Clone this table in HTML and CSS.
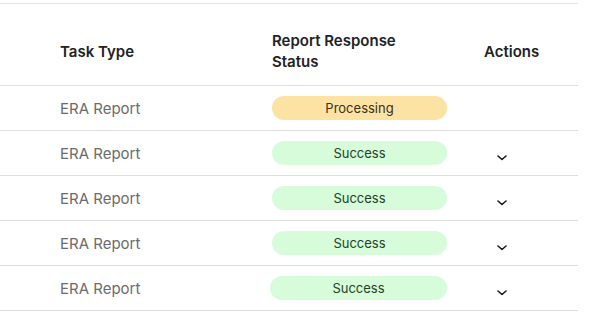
FILE: index.html
```html
<!DOCTYPE html>
<html>
<head>
<meta charset="utf-8">
<link rel="stylesheet" href="styles.css">
</head>
<body>
<div class="table">
  <div class="row head">
    <div class="cell c1">Task Type</div>
    <div class="cell c2">Report Response<br>Status</div>
    <div class="cell c3">Actions</div>
  </div>
  <div class="row">
    <div class="cell c1 type">ERA Report</div>
    <div class="cell c2"><span class="pill processing">Processing</span></div>
    <div class="cell c3"></div>
  </div>
  <div class="row">
    <div class="cell c1 type">ERA Report</div>
    <div class="cell c2"><span class="pill success">Success</span></div>
    <div class="cell c3"><svg class="chev" viewBox="0 0 10 6" width="10" height="6"><path d="M1 1 L5 4.5 L9 1" fill="none" stroke="#1a1a1a" stroke-width="1.6" stroke-linecap="round" stroke-linejoin="round"/></svg></div>
  </div>
  <div class="row">
    <div class="cell c1 type">ERA Report</div>
    <div class="cell c2"><span class="pill success">Success</span></div>
    <div class="cell c3"><svg class="chev" viewBox="0 0 10 6" width="10" height="6"><path d="M1 1 L5 4.5 L9 1" fill="none" stroke="#1a1a1a" stroke-width="1.6" stroke-linecap="round" stroke-linejoin="round"/></svg></div>
  </div>
  <div class="row">
    <div class="cell c1 type">ERA Report</div>
    <div class="cell c2"><span class="pill success">Success</span></div>
    <div class="cell c3"><svg class="chev" viewBox="0 0 10 6" width="10" height="6"><path d="M1 1 L5 4.5 L9 1" fill="none" stroke="#1a1a1a" stroke-width="1.6" stroke-linecap="round" stroke-linejoin="round"/></svg></div>
  </div>
  <div class="row">
    <div class="cell c1 type">ERA Report</div>
    <div class="cell c2"><span class="pill success shift">Success</span></div>
    <div class="cell c3"><svg class="chev" viewBox="0 0 10 6" width="10" height="6"><path d="M1 1 L5 4.5 L9 1" fill="none" stroke="#1a1a1a" stroke-width="1.6" stroke-linecap="round" stroke-linejoin="round"/></svg></div>
  </div>
</div>
</body>
</html>
```
FILE: styles.css
```css
html, body {
  margin: 0;
  padding: 0;
  background: #ffffff;
}
body {
  font-family: Inter, "Noto Sans", sans-serif;
}
.table {
  margin-top: 3px;
  width: 578px;
  border-top: 1px solid #e2e2e2;
}
.row {
  display: grid;
  grid-template-columns: 272px 212px 94px;
  height: 44px;
  border-bottom: 1px solid #dedede;
  align-items: center;
}
.row.head {
  height: 82px;
  box-sizing: border-box;
  padding-top: 13px;
}
.head .cell {
  font-size: 15px;
  font-weight: 600;
  color: #222222;
  line-height: 21px;
}
.c1 {
  padding-left: 60px;
}
.type {
  font-size: 15px;
  color: #6b6b6b;
}
.pill {
  display: flex;
  align-items: center;
  justify-content: center;
  width: 175px;
  height: 24px;
  border-radius: 12px;
  font-size: 13px;
  color: #2e2e2e;
}
.pill.shift {
  margin-left: -2px;
  width: 177px;
}
.processing {
  background: #fde3a3;
  color: #3a3020;
}
.success {
  background: #d6fcd9;
  color: #24402a;
}
.c3 {
  display: flex;
}
.chev {
  margin-left: 13px;
  margin-top: 10px;
}
```
